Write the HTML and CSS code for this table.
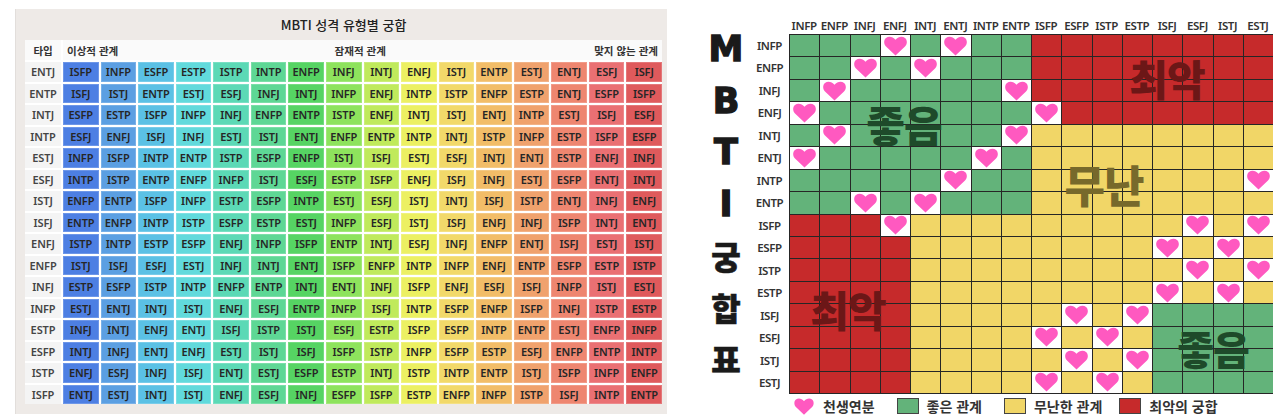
FILE: index.html
```html
<!DOCTYPE html>
<html lang="ko">
<head>
<meta charset="utf-8">
<title>MBTI 궁합표</title>
<link rel="stylesheet" href="styles.css">
</head>
<body>
<svg class="defs" aria-hidden="true"><symbol id="hrt" viewBox="0 0 24 20"><path d="M12 19.6 L2.5 10.5 C0.1 8.1 0 4 2.5 1.9 C5 -0.2 9.3 0.3 12 3.7 C14.7 0.3 19 -0.2 21.5 1.9 C24 4 23.9 8.1 21.5 10.5 Z"/></symbol></svg>
<div class="page">
  <section class="panel">
    <div class="ptitle">MBTI 성격 유형별 궁합</div>
    <div class="tbl">
      <div class="tr hdr"><b>타입</b><div class="hspan"><span>이상적 관계</span><span>잠재적 관계</span><span>맞지 않는 관계</span></div></div>
      <div class="tr"><b>ENTJ</b><i>ISFP</i><i>INFP</i><i>ESFP</i><i>ESTP</i><i>ISTP</i><i>INTP</i><i>ENFP</i><i>INFJ</i><i>INTJ</i><i>ENFJ</i><i>ISTJ</i><i>ENTP</i><i>ESTJ</i><i>ENTJ</i><i>ESFJ</i><i>ISFJ</i></div>
      <div class="tr"><b>ENTP</b><i>ISFJ</i><i>ISTJ</i><i>ENTP</i><i>ESTJ</i><i>ESFJ</i><i>INFJ</i><i>INTJ</i><i>INFP</i><i>ENFJ</i><i>INTP</i><i>ISTP</i><i>ENFP</i><i>ESTP</i><i>ENTJ</i><i>ESFP</i><i>ISFP</i></div>
      <div class="tr"><b>INTJ</b><i>ESFP</i><i>ESTP</i><i>ISFP</i><i>INFP</i><i>INFJ</i><i>ENFP</i><i>ENTP</i><i>ISTP</i><i>ENFJ</i><i>INTJ</i><i>ISTJ</i><i>ENTJ</i><i>INTP</i><i>ESTJ</i><i>ISFJ</i><i>ESFJ</i></div>
      <div class="tr"><b>INTP</b><i>ESFJ</i><i>ENFJ</i><i>ISFJ</i><i>INFJ</i><i>ESTJ</i><i>ISTJ</i><i>ENTJ</i><i>ENFP</i><i>ENTP</i><i>INTP</i><i>INTJ</i><i>ISTP</i><i>INFP</i><i>ESTP</i><i>ISFP</i><i>ESFP</i></div>
      <div class="tr"><b>ESTJ</b><i>INFP</i><i>ISFP</i><i>INTP</i><i>ENTP</i><i>ISTP</i><i>ESFP</i><i>ENFP</i><i>ISTJ</i><i>ISFJ</i><i>ESTJ</i><i>ESFJ</i><i>INTJ</i><i>ENTJ</i><i>ESTP</i><i>ENFJ</i><i>INFJ</i></div>
      <div class="tr"><b>ESFJ</b><i>INTP</i><i>ISTP</i><i>ENTP</i><i>ENFP</i><i>INFP</i><i>ISTJ</i><i>ESFJ</i><i>ESTP</i><i>ISFP</i><i>ENFJ</i><i>ISFJ</i><i>INFJ</i><i>ESTJ</i><i>ESFP</i><i>ENTJ</i><i>INTJ</i></div>
      <div class="tr"><b>ISTJ</b><i>ENFP</i><i>ENTP</i><i>ISFP</i><i>INFP</i><i>ESTP</i><i>ESFP</i><i>INTP</i><i>ESTJ</i><i>ESFJ</i><i>ISTJ</i><i>INTJ</i><i>ISFJ</i><i>ISTP</i><i>ENTJ</i><i>INFJ</i><i>ENFJ</i></div>
      <div class="tr"><b>ISFJ</b><i>ENTP</i><i>ENFP</i><i>INTP</i><i>ISTP</i><i>ESFP</i><i>ESTP</i><i>ESTJ</i><i>INFP</i><i>ESFJ</i><i>ISTJ</i><i>ISFJ</i><i>ENFJ</i><i>INFJ</i><i>ISFP</i><i>INTJ</i><i>ENTJ</i></div>
      <div class="tr"><b>ENFJ</b><i>ISTP</i><i>INTP</i><i>ESTP</i><i>ESFP</i><i>ENFJ</i><i>INFP</i><i>ISFP</i><i>ENTP</i><i>INTJ</i><i>ESFJ</i><i>INFJ</i><i>ENFP</i><i>ENTJ</i><i>ISFJ</i><i>ESTJ</i><i>ISTJ</i></div>
      <div class="tr"><b>ENFP</b><i>ISTJ</i><i>ISFJ</i><i>ESFJ</i><i>ESTJ</i><i>INFJ</i><i>INTJ</i><i>ENTJ</i><i>ISFP</i><i>ENFP</i><i>INTP</i><i>INFP</i><i>ENFJ</i><i>ENTP</i><i>ESFP</i><i>ESTP</i><i>ISTP</i></div>
      <div class="tr"><b>INFJ</b><i>ESTP</i><i>ESFP</i><i>ISTP</i><i>INTP</i><i>ENFP</i><i>ENTP</i><i>INTJ</i><i>ENTJ</i><i>INFJ</i><i>ISFP</i><i>ENFJ</i><i>ESFJ</i><i>ISFJ</i><i>INFP</i><i>ISTJ</i><i>ESTJ</i></div>
      <div class="tr"><b>INFP</b><i>ESTJ</i><i>ENTJ</i><i>INTJ</i><i>ISTJ</i><i>ENFJ</i><i>ESFJ</i><i>ENTP</i><i>INFP</i><i>ISFJ</i><i>INTP</i><i>ESFP</i><i>ENFP</i><i>ISFP</i><i>INFJ</i><i>ISTP</i><i>ESTP</i></div>
      <div class="tr"><b>ESTP</b><i>INFJ</i><i>INTJ</i><i>ENFJ</i><i>ENTJ</i><i>ISFJ</i><i>ISTP</i><i>ISTJ</i><i>ESFJ</i><i>ESTP</i><i>ISFP</i><i>ESFP</i><i>INTP</i><i>ENTP</i><i>ESTJ</i><i>ENFP</i><i>INFP</i></div>
      <div class="tr"><b>ESFP</b><i>INTJ</i><i>INFJ</i><i>ENTJ</i><i>ENFJ</i><i>ESTJ</i><i>ISTJ</i><i>ISFJ</i><i>ISFP</i><i>ISTP</i><i>INFP</i><i>ESFP</i><i>ESTP</i><i>ESFJ</i><i>ENFP</i><i>ENTP</i><i>INTP</i></div>
      <div class="tr"><b>ISTP</b><i>ENFJ</i><i>ESFJ</i><i>INFJ</i><i>ISFJ</i><i>ENTJ</i><i>ESTJ</i><i>ESFP</i><i>ESTP</i><i>INTJ</i><i>ISTP</i><i>INTP</i><i>ENTP</i><i>ISTJ</i><i>ISFP</i><i>INFP</i><i>ENFP</i></div>
      <div class="tr"><b>ISFP</b><i>ENTJ</i><i>ESTJ</i><i>INTJ</i><i>ISTJ</i><i>ENFJ</i><i>ESFJ</i><i>INFJ</i><i>ESFP</i><i>ISFP</i><i>ESTP</i><i>ENFP</i><i>INFP</i><i>ISTP</i><i>ISFJ</i><i>INTP</i><i>ENTP</i></div>
    </div>
  </section>

  <section class="chart">
    <div class="vt"><span class="lat">M</span><span class="lat">B</span><span class="lat">T</span><span class="lat">I</span><span>궁</span><span>합</span><span>표</span></div>
    <div class="ch"><span>INFP</span><span>ENFP</span><span>INFJ</span><span>ENFJ</span><span>INTJ</span><span>ENTJ</span><span>INTP</span><span>ENTP</span><span>ISFP</span><span>ESFP</span><span>ISTP</span><span>ESTP</span><span>ISFJ</span><span>ESFJ</span><span>ISTJ</span><span>ESTJ</span></div>
    <div class="rh"><span>INFP</span><span>ENFP</span><span>INFJ</span><span>ENFJ</span><span>INTJ</span><span>ENTJ</span><span>INTP</span><span>ENTP</span><span>ISFP</span><span>ESFP</span><span>ISTP</span><span>ESTP</span><span>ISFJ</span><span>ESFJ</span><span>ISTJ</span><span>ESTJ</span></div>
    <div class="board">
      <i class="g"></i><i class="g"></i><i class="g"></i><i class="h"><svg viewBox="0 0 24 20"><use href="#hrt"/></svg></i><i class="g"></i><i class="h"><svg viewBox="0 0 24 20"><use href="#hrt"/></svg></i><i class="g"></i><i class="g"></i><i class="r"></i><i class="r"></i><i class="r"></i><i class="r"></i><i class="r"></i><i class="r"></i><i class="r"></i><i class="r"></i>
      <i class="g"></i><i class="g"></i><i class="h"><svg viewBox="0 0 24 20"><use href="#hrt"/></svg></i><i class="g"></i><i class="h"><svg viewBox="0 0 24 20"><use href="#hrt"/></svg></i><i class="g"></i><i class="g"></i><i class="g"></i><i class="r"></i><i class="r"></i><i class="r"></i><i class="r"></i><i class="r"></i><i class="r"></i><i class="r"></i><i class="r"></i>
      <i class="g"></i><i class="h"><svg viewBox="0 0 24 20"><use href="#hrt"/></svg></i><i class="g"></i><i class="g"></i><i class="g"></i><i class="g"></i><i class="g"></i><i class="h"><svg viewBox="0 0 24 20"><use href="#hrt"/></svg></i><i class="r"></i><i class="r"></i><i class="r"></i><i class="r"></i><i class="r"></i><i class="r"></i><i class="r"></i><i class="r"></i>
      <i class="h"><svg viewBox="0 0 24 20"><use href="#hrt"/></svg></i><i class="g"></i><i class="g"></i><i class="g"></i><i class="g"></i><i class="g"></i><i class="g"></i><i class="g"></i><i class="h"><svg viewBox="0 0 24 20"><use href="#hrt"/></svg></i><i class="r"></i><i class="r"></i><i class="r"></i><i class="r"></i><i class="r"></i><i class="r"></i><i class="r"></i>
      <i class="g"></i><i class="h"><svg viewBox="0 0 24 20"><use href="#hrt"/></svg></i><i class="g"></i><i class="g"></i><i class="g"></i><i class="g"></i><i class="g"></i><i class="h"><svg viewBox="0 0 24 20"><use href="#hrt"/></svg></i><i class="y"></i><i class="y"></i><i class="y"></i><i class="y"></i><i class="y"></i><i class="y"></i><i class="y"></i><i class="y"></i>
      <i class="h"><svg viewBox="0 0 24 20"><use href="#hrt"/></svg></i><i class="g"></i><i class="g"></i><i class="g"></i><i class="g"></i><i class="g"></i><i class="h"><svg viewBox="0 0 24 20"><use href="#hrt"/></svg></i><i class="g"></i><i class="y"></i><i class="y"></i><i class="y"></i><i class="y"></i><i class="y"></i><i class="y"></i><i class="y"></i><i class="y"></i>
      <i class="g"></i><i class="g"></i><i class="g"></i><i class="g"></i><i class="g"></i><i class="h"><svg viewBox="0 0 24 20"><use href="#hrt"/></svg></i><i class="g"></i><i class="g"></i><i class="y"></i><i class="y"></i><i class="y"></i><i class="y"></i><i class="y"></i><i class="y"></i><i class="y"></i><i class="h"><svg viewBox="0 0 24 20"><use href="#hrt"/></svg></i>
      <i class="g"></i><i class="g"></i><i class="h"><svg viewBox="0 0 24 20"><use href="#hrt"/></svg></i><i class="g"></i><i class="h"><svg viewBox="0 0 24 20"><use href="#hrt"/></svg></i><i class="g"></i><i class="g"></i><i class="g"></i><i class="y"></i><i class="y"></i><i class="y"></i><i class="y"></i><i class="y"></i><i class="y"></i><i class="y"></i><i class="y"></i>
      <i class="r"></i><i class="r"></i><i class="r"></i><i class="h"><svg viewBox="0 0 24 20"><use href="#hrt"/></svg></i><i class="y"></i><i class="y"></i><i class="y"></i><i class="y"></i><i class="y"></i><i class="y"></i><i class="y"></i><i class="y"></i><i class="y"></i><i class="h"><svg viewBox="0 0 24 20"><use href="#hrt"/></svg></i><i class="y"></i><i class="h"><svg viewBox="0 0 24 20"><use href="#hrt"/></svg></i>
      <i class="r"></i><i class="r"></i><i class="r"></i><i class="r"></i><i class="y"></i><i class="y"></i><i class="y"></i><i class="y"></i><i class="y"></i><i class="y"></i><i class="y"></i><i class="y"></i><i class="h"><svg viewBox="0 0 24 20"><use href="#hrt"/></svg></i><i class="y"></i><i class="h"><svg viewBox="0 0 24 20"><use href="#hrt"/></svg></i><i class="y"></i>
      <i class="r"></i><i class="r"></i><i class="r"></i><i class="r"></i><i class="y"></i><i class="y"></i><i class="y"></i><i class="y"></i><i class="y"></i><i class="y"></i><i class="y"></i><i class="y"></i><i class="y"></i><i class="h"><svg viewBox="0 0 24 20"><use href="#hrt"/></svg></i><i class="y"></i><i class="h"><svg viewBox="0 0 24 20"><use href="#hrt"/></svg></i>
      <i class="r"></i><i class="r"></i><i class="r"></i><i class="r"></i><i class="y"></i><i class="y"></i><i class="y"></i><i class="y"></i><i class="y"></i><i class="y"></i><i class="y"></i><i class="y"></i><i class="h"><svg viewBox="0 0 24 20"><use href="#hrt"/></svg></i><i class="y"></i><i class="h"><svg viewBox="0 0 24 20"><use href="#hrt"/></svg></i><i class="y"></i>
      <i class="r"></i><i class="r"></i><i class="r"></i><i class="r"></i><i class="y"></i><i class="y"></i><i class="y"></i><i class="y"></i><i class="y"></i><i class="h"><svg viewBox="0 0 24 20"><use href="#hrt"/></svg></i><i class="y"></i><i class="h"><svg viewBox="0 0 24 20"><use href="#hrt"/></svg></i><i class="g"></i><i class="g"></i><i class="g"></i><i class="g"></i>
      <i class="r"></i><i class="r"></i><i class="r"></i><i class="r"></i><i class="y"></i><i class="y"></i><i class="y"></i><i class="y"></i><i class="h"><svg viewBox="0 0 24 20"><use href="#hrt"/></svg></i><i class="y"></i><i class="h"><svg viewBox="0 0 24 20"><use href="#hrt"/></svg></i><i class="y"></i><i class="g"></i><i class="g"></i><i class="g"></i><i class="g"></i>
      <i class="r"></i><i class="r"></i><i class="r"></i><i class="r"></i><i class="y"></i><i class="y"></i><i class="y"></i><i class="y"></i><i class="y"></i><i class="h"><svg viewBox="0 0 24 20"><use href="#hrt"/></svg></i><i class="y"></i><i class="h"><svg viewBox="0 0 24 20"><use href="#hrt"/></svg></i><i class="g"></i><i class="g"></i><i class="g"></i><i class="g"></i>
      <i class="r"></i><i class="r"></i><i class="r"></i><i class="r"></i><i class="y"></i><i class="y"></i><i class="y"></i><i class="y"></i><i class="h"><svg viewBox="0 0 24 20"><use href="#hrt"/></svg></i><i class="y"></i><i class="h"><svg viewBox="0 0 24 20"><use href="#hrt"/></svg></i><i class="y"></i><i class="g"></i><i class="g"></i><i class="g"></i><i class="g"></i>
      <span class="ov ov-g1">좋음</span>
      <span class="ov ov-r1">최악</span>
      <span class="ov ov-y">무난</span>
      <span class="ov ov-r2">최악</span>
      <span class="ov ov-g2">좋음</span>
    </div>
    <div class="lg">
      <span class="li"><svg class="lh" viewBox="0 0 24 20"><use href="#hrt"/></svg>천생연분</span>
      <span class="li"><span class="sw sg"></span>좋은 관계</span>
      <span class="li"><span class="sw sy"></span>무난한 관계</span>
      <span class="li li-last"><span class="sw sr"></span>최악의 궁합</span>
    </div>
  </section>
</div>
</body>
</html>
```

FILE: styles.css
```css
html, body {
  margin: 0;
  padding: 0;
  background: #ffffff;
}
body {
  font-family: "Noto Sans", "Noto Sans CJK KR", sans-serif;
  color: #2b2b2b;
}
.defs {
  position: absolute;
  width: 0;
  height: 0;
  overflow: hidden;
}
.page {
  display: flex;
  align-items: flex-start;
  width: 1273px;
  height: 418px;
  overflow: hidden;
}

/* ---------- left panel ---------- */
.panel {
  flex: none;
  margin: 9px 0 0 15px;
  width: 652px;
  height: 405px;
  box-sizing: border-box;
  padding: 0 5px 0 9px;
  background: #eeeae7;
  border-left: 1px solid #e2dedb;
}
.ptitle {
  height: 31px;
  line-height: 31px;
  text-align: center;
  font-family: "Noto Sans CJK KR", sans-serif;
  font-size: 13px;
  font-weight: 500;
  color: #222;
}
.tbl {
  display: grid;
  grid-template-columns: 36px repeat(16, 1fr);
  grid-template-rows: 20px;
  grid-auto-rows: 19.5px;
  gap: 2px;
  background: #ffffff;
}
.tr {
  display: contents;
}
.tr > b,
.tr > i {
  display: flex;
  align-items: center;
  justify-content: center;
  font-style: normal;
  font-size: 11px;
  font-weight: 600;
  letter-spacing: -0.1px;
}
.tr > b {
  background: #f4f4f4;
  color: #454545;
}
.hdr > b {
  background: #fafafa;
  font-family: "Noto Sans CJK KR", sans-serif;
  font-size: 10.5px;
  font-weight: 700;
  color: #333;
}
.hspan {
  grid-column: 2 / -1;
  display: flex;
  align-items: center;
  justify-content: space-between;
  padding: 0 4px;
  background: #fafafa;
  font-family: "Noto Sans CJK KR", sans-serif;
  font-size: 10.5px;
  font-weight: 700;
  color: #333;
}
.hspan span:nth-child(2) {
  margin-left: 8px;
}
.tr > i { color: #262626; box-shadow: inset 0 0 0 1px rgba(255,255,255,0.18); }
.tr > i:nth-child(2)  { background: #4d7fe3; }
.tr > i:nth-child(3)  { background: #5b9fe2; }
.tr > i:nth-child(4)  { background: #5bc1e5; }
.tr > i:nth-child(5)  { background: #61dadc; }
.tr > i:nth-child(6)  { background: #5cd9b6; }
.tr > i:nth-child(7)  { background: #5ed795; }
.tr > i:nth-child(8)  { background: #56d463; }
.tr > i:nth-child(9)  { background: #8ee35d; }
.tr > i:nth-child(10) { background: #c0ea5c; }
.tr > i:nth-child(11) { background: #ecf062; }
.tr > i:nth-child(12) { background: #f2d96a; }
.tr > i:nth-child(13) { background: #f2bd68; }
.tr > i:nth-child(14) { background: #f0a26d; }
.tr > i:nth-child(15) { background: #ee8670; }
.tr > i:nth-child(16) { background: #ea7073; }
.tr > i:nth-child(17) { background: #df5a5c; }

/* ---------- right chart ---------- */
.chart {
  flex: none;
  margin-left: 33px;
  display: grid;
  grid-template-columns: 52px 37px 484px;
  grid-template-rows: 34px 360px 24px;
}
.vt {
  grid-column: 1;
  grid-row: 1 / 3;
  display: flex;
  flex-direction: column;
  align-items: center;
  padding-top: 24px;
  font-family: "Noto Sans CJK KR", sans-serif;
  font-weight: 900;
  color: #1a1a1a;
}
.vt span {
  height: 51.5px;
  line-height: 51.5px;
  font-size: 32px;
  -webkit-text-stroke: 0.6px #1a1a1a;
}
.vt .lat {
  font-family: "DejaVu Sans", sans-serif;
  font-weight: 700;
  font-size: 35px;
  -webkit-text-stroke: 1.4px #1a1a1a;
}
.ch {
  grid-column: 3;
  grid-row: 1;
  display: grid;
  grid-template-columns: repeat(16, 1fr);
  align-items: end;
  padding-bottom: 1px;
}
.ch span,
.rh span {
  font-size: 11.5px;
  font-weight: 600;
  letter-spacing: -0.4px;
  color: #333;
  text-align: center;
  white-space: nowrap;
}
.rh {
  grid-column: 2;
  grid-row: 2;
  display: grid;
  grid-template-rows: repeat(16, 1fr);
  align-items: center;
  padding-right: 2px;
}
.board {
  grid-column: 3;
  grid-row: 2;
  position: relative;
  box-sizing: border-box;
  display: grid;
  grid-template-columns: repeat(16, 1fr);
  grid-template-rows: repeat(16, 1fr);
  gap: 1px;
  background: #262626;
  border: 1px solid #262626;
  border-right: 0;
}
.board > i {
  display: block;
  font-style: normal;
}
.board .g { background: #63b37a; }
.board .r { background: #c62a2b; }
.board .y { background: #f1d667; }
.board .h {
  background: #ffffff;
  display: flex;
  align-items: center;
  justify-content: center;
}
.board .h svg {
  width: 25px;
  height: 20px;
  fill: #ff59c0;
}
.ov {
  position: absolute;
  transform: translate(-50%, -50%);
  font-family: "Noto Sans CJK KR", sans-serif;
  font-weight: 900;
  font-size: 42px;
  line-height: 1;
  letter-spacing: -1px;
  white-space: nowrap;
}
.ov-g1 { left: 114px; top: 89px;  color: #1e4a2a; }
.ov-r1 { left: 377px; top: 43px;  color: #6c1717; }
.ov-y  { left: 314px; top: 149px; color: #77692b; font-size: 44px; }
.ov-r2 { left: 58px;  top: 274px; color: #6c1717; }
.ov-g2 { left: 423px; top: 313px; color: #1e4a2a; font-size: 40px; }

.lg {
  grid-column: 2 / 4;
  grid-row: 3;
  display: flex;
  align-items: center;
  gap: 22px;
  padding-left: 41px;
  font-family: "Noto Sans CJK KR", sans-serif;
  font-size: 14px;
  font-weight: 700;
  color: #333;
}
.li {
  display: flex;
  align-items: center;
  gap: 8px;
  white-space: nowrap;
}
.li-last {
  margin-left: -5px;
}
.lh {
  width: 22px;
  height: 17px;
  fill: #ff59c0;
}
.sw {
  display: block;
  width: 20px;
  height: 14px;
  border: 1px solid #444;
}
.sg { background: #63b37a; }
.sy { background: #f1d667; }
.sr { background: #c62a2b; }
```
